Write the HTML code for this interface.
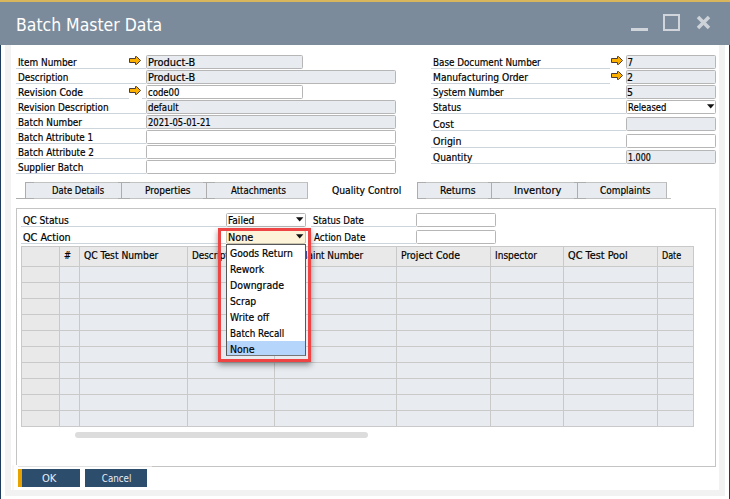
<!DOCTYPE html>
<html lang="en"><head><meta charset="utf-8"><title>Batch Master Data</title>
<style>

html,body{margin:0;padding:0;}
body{width:730px;height:499px;overflow:hidden;background:#fff;position:relative;font-family:"DejaVu Sans Condensed", "DejaVu Sans", "Liberation Sans", sans-serif;font-size:9.7px;font-stretch:condensed;color:#000;}
.abs,.t,.f,.ul,.tab,.hl,.vl{position:absolute;}
.t{white-space:nowrap;line-height:13px;height:13px;-webkit-text-stroke:0.18px currentColor;transform-origin:0 0;transform:scaleX(1);}
.f{box-sizing:border-box;height:14px;border:1px solid #b6b6b6;border-radius:1.5px;background:#e8ecf0;}
.f.w{background:#fff;}
.ul{height:1px;background:#cdd5dc;}
.tab{box-sizing:border-box;top:182px;height:17px;background:#e8ecf0;border:1px solid #c2c2c2;border-left-color:#adadad;border-right:none;}
.hl{height:1px;background:#c9c9c9;}
.vl{width:1px;background:#c9c9c9;}
.li{position:absolute;left:0;right:0;height:16px;}

</style></head><body>

<div class="abs" style="left:0;top:0;width:730px;height:2px;background:#d9b55c"></div>
<div class="abs" style="left:0;top:2px;width:730px;height:43px;background:#7b8b9b"></div>
<div class="abs" style="left:0;top:45px;width:1px;height:454px;background:#1f3c5c"></div>
<div class="abs" style="left:729px;top:45px;width:1px;height:454px;background:#1f3c5c"></div>
<div class="abs" style="left:5px;top:45px;width:6px;height:451px;background:#f2f2f2"></div>
<div class="abs" style="left:719px;top:45px;width:6px;height:451px;background:#f2f2f2"></div>
<div class="abs" style="left:5px;top:490px;width:720px;height:6px;background:#f2f2f2"></div>
<div class="abs" id="title" style="left:15.6px;top:14px;font-size:17.5px;line-height:22px;color:#fff;white-space:nowrap;transform-origin:0 0;transform:scaleX(.997)">Batch Master Data</div>
<svg class="abs" style="left:620px;top:5px" width="110" height="40" viewBox="620 5 110 40"><rect x="631" y="28" width="17" height="3" fill="#cfd5db"/><rect x="664" y="15" width="15" height="15" fill="none" stroke="#cfd5db" stroke-width="2"/><path d="M698 17 L709 28 M709 17 L698 28" stroke="#cdd3d9" stroke-width="3.5" fill="none"/></svg>
<div class="t" id="l0" style="left:17.68px;top:56px;transform:scaleX(1.0193);">Item Number</div>
<div class="ul" style="left:16px;top:68px;width:130px"></div>
<svg class="abs" style="left:129px;top:56px" width="13" height="10" viewBox="0 0 13 10"><path d="M0.5 2.5H6.5V0.5H7.5L11.5 4.5L7.5 8.5H6.5V6.5H0.5Z" fill="#fbb000" stroke="#4a3c3c" stroke-width="1"/></svg>
<div class="f" style="left:146px;top:55px;width:157px"></div>
<div class="t" style="left:147.77px;top:56px;transform:scaleX(1.1275);">Product-B</div>
<div class="t" id="l1" style="left:17.69px;top:71px;transform:scaleX(1.0146);">Description</div>
<div class="ul" style="left:16px;top:83px;width:130px"></div>
<div class="f" style="left:146px;top:70px;width:250px"></div>
<div class="t" style="left:147.77px;top:71px;transform:scaleX(1.1275);">Product-B</div>
<div class="t" id="l2" style="left:17.64px;top:86px;transform:scaleX(1.0583);">Revision Code</div>
<div class="ul" style="left:16px;top:98px;width:130px"></div>
<div class="abs" style="left:129px;top:98px;width:13px;height:1px;background:#fff"></div>
<svg class="abs" style="left:129px;top:86px" width="13" height="10" viewBox="0 0 13 10"><path d="M0.5 2.5H6.5V0.5H7.5L11.5 4.5L7.5 8.5H6.5V6.5H0.5Z" fill="#fbb000" stroke="#4a3c3c" stroke-width="1"/></svg>
<div class="f w" style="left:146px;top:85px;width:157px"></div>
<div class="t" style="left:147.92px;top:86px;transform:scaleX(0.9806);">code00</div>
<div class="t" id="l3" style="left:17.68px;top:101px;transform:scaleX(1.0207);">Revision Description</div>
<div class="ul" style="left:16px;top:113px;width:130px"></div>
<div class="f" style="left:146px;top:100px;width:250px"></div>
<div class="t" style="left:147.90px;top:101px;transform:none;">default</div>
<div class="t" id="l4" style="left:17.68px;top:116px;transform:scaleX(1.0177);">Batch Number</div>
<div class="ul" style="left:16px;top:128px;width:130px"></div>
<div class="f" style="left:146px;top:115px;width:250px"></div>
<div class="t" style="left:147.93px;top:116px;transform:scaleX(0.9651);">2021-05-01-21</div>
<div class="t" id="l5" style="left:17.69px;top:131px;transform:scaleX(1.0068);">Batch Attribute 1</div>
<div class="ul" style="left:16px;top:143px;width:130px"></div>
<div class="f w" style="left:146px;top:130px;width:250px"></div>
<div class="t" id="l6" style="left:17.68px;top:146px;transform:scaleX(1.0178);">Batch Attribute 2</div>
<div class="ul" style="left:16px;top:158px;width:130px"></div>
<div class="f w" style="left:146px;top:145px;width:250px"></div>
<div class="t" id="l7" style="left:17.67px;top:161px;transform:scaleX(1.0258);">Supplier Batch</div>
<div class="ul" style="left:16px;top:173px;width:130px"></div>
<div class="f w" style="left:146px;top:160px;width:250px"></div>
<div class="t" id="r0" style="left:432.99px;top:56px;transform:scaleX(1.0075);">Base Document Number</div>
<div class="ul" style="left:431px;top:68px;width:179px"></div>
<svg class="abs" style="left:611px;top:56px" width="13" height="10" viewBox="0 0 13 10"><path d="M0.5 2.5H6.5V0.5H7.5L11.5 4.5L7.5 8.5H6.5V6.5H0.5Z" fill="#fbb000" stroke="#4a3c3c" stroke-width="1"/></svg>
<div class="f" style="left:626px;top:55px;width:90px"></div>
<div class="t" style="left:627.50px;top:56px;transform:none;">7</div>
<div class="t" id="r1" style="left:432.95px;top:71px;transform:scaleX(1.0478);">Manufacturing Order</div>
<div class="ul" style="left:431px;top:83px;width:179px"></div>
<svg class="abs" style="left:611px;top:71px" width="13" height="10" viewBox="0 0 13 10"><path d="M0.5 2.5H6.5V0.5H7.5L11.5 4.5L7.5 8.5H6.5V6.5H0.5Z" fill="#fbb000" stroke="#4a3c3c" stroke-width="1"/></svg>
<div class="f" style="left:626px;top:70px;width:90px"></div>
<div class="t" style="left:627.42px;top:71px;transform:scaleX(1.0750);">2</div>
<div class="t" id="r2" style="left:432.99px;top:86px;transform:scaleX(1.0058);">System Number</div>
<div class="ul" style="left:431px;top:98px;width:195px"></div>
<div class="f" style="left:626px;top:85px;width:90px"></div>
<div class="t" style="left:627.42px;top:86px;transform:scaleX(1.0750);">5</div>
<div class="t" id="r3" style="left:432.99px;top:101px;transform:scaleX(1.0115);">Status</div>
<div class="ul" style="left:431px;top:113px;width:195px"></div>
<div class="f w" style="left:626px;top:100px;width:90px"></div>
<div class="t" style="left:627.53px;top:101px;transform:scaleX(0.9711);">Released</div>
<svg class="abs" style="left:707px;top:104px" width="8" height="5" viewBox="0 0 8 5"><path d="M0 0.3H7.4L3.7 4.5Z" fill="#111"/></svg>
<div class="t" id="r4" style="left:432.92px;top:118px;transform:scaleX(1.0833);">Cost</div>
<div class="ul" style="left:431px;top:130px;width:195px"></div>
<div class="f" style="left:626px;top:117px;width:90px"></div>
<div class="t" id="r5" style="left:432.92px;top:135px;transform:scaleX(1.0800);">Origin</div>
<div class="ul" style="left:431px;top:147px;width:195px"></div>
<div class="f w" style="left:626px;top:134px;width:90px"></div>
<div class="t" id="r6" style="left:432.96px;top:151px;transform:scaleX(1.0444);">Quantity</div>
<div class="ul" style="left:431px;top:163px;width:195px"></div>
<div class="f" style="left:626px;top:150px;width:90px"></div>
<div class="t" style="left:627.58px;top:151px;transform:scaleX(0.9167);">1.000</div>
<div class="hl" style="left:16px;top:198px;width:291px;background:#c2c2c2"></div>
<div class="hl" style="left:417px;top:198px;width:254px;background:#c2c2c2"></div>
<div class="tab" style="left:25px;width:96px;"></div>
<div class="t" id="tab0" style="left:51.83px;top:184px;transform:scaleX(0.9673);">Date Details</div>
<div class="tab" style="left:121px;width:85px;"></div>
<div class="t" id="tab1" style="left:144.67px;top:184px;transform:scaleX(1.0326);">Properties</div>
<div class="tab" style="left:206px;width:102px;border-right:1px solid #b8b8b8;"></div>
<div class="t" id="tab2" style="left:230.70px;top:184px;transform:scaleX(0.9873);">Attachments</div>
<div class="t" id="tab3" style="left:332.44px;top:184px;transform:scaleX(1.0594);">Quality Control</div>
<div class="tab" style="left:417px;width:74px;"></div>
<div class="t" id="tab4" style="left:440.33px;top:184px;transform:scaleX(1.0656);">Returns</div>
<div class="tab" style="left:491px;width:86px;"></div>
<div class="t" id="tab5" style="left:514.26px;top:184px;transform:scaleX(1.1375);">Inventory</div>
<div class="tab" style="left:577px;width:90px;border-right:1px solid #b8b8b8;"></div>
<div class="t" id="tab6" style="left:600.18px;top:184px;transform:scaleX(1.0250);">Complaints</div>
<div class="abs" style="left:25px;top:182px;width:9px;height:1px;background:#adadad"></div>
<div class="abs" style="left:16px;top:198px;width:18px;height:1px;background:#adadad"></div>
<div class="abs" style="left:118px;top:182px;width:12px;height:1px;background:#adadad"></div>
<div class="abs" style="left:118px;top:198px;width:12px;height:1px;background:#adadad"></div>
<div class="abs" style="left:203px;top:182px;width:12px;height:1px;background:#adadad"></div>
<div class="abs" style="left:203px;top:198px;width:12px;height:1px;background:#adadad"></div>
<div class="abs" style="left:417px;top:182px;width:9px;height:1px;background:#adadad"></div>
<div class="abs" style="left:417px;top:198px;width:9px;height:1px;background:#adadad"></div>
<div class="abs" style="left:488px;top:182px;width:12px;height:1px;background:#adadad"></div>
<div class="abs" style="left:488px;top:198px;width:12px;height:1px;background:#adadad"></div>
<div class="abs" style="left:574px;top:182px;width:12px;height:1px;background:#adadad"></div>
<div class="abs" style="left:574px;top:198px;width:12px;height:1px;background:#adadad"></div>
<div class="abs" style="left:16px;top:208px;width:700px;height:259px;box-sizing:border-box;border:1px solid #c4c4c4"></div>
<div class="t" id="qcs" style="left:22.65px;top:214px;transform:scaleX(1.0524);">QC Status</div>
<div class="ul" style="left:21px;top:226px;width:205px"></div>
<div class="t" id="qca" style="left:22.59px;top:231px;transform:scaleX(1.1098);">QC Action</div>
<div class="ul" style="left:21px;top:243px;width:205px"></div>
<div class="f w" style="left:226px;top:213px;width:80px"></div>
<div class="t" style="left:227.76px;top:214px;transform:scaleX(1.0417);">Failed</div>
<svg class="abs" style="left:296px;top:217px" width="8" height="5" viewBox="0 0 8 5"><path d="M0 0.3H7.4L3.7 4.5Z" fill="#111"/></svg>
<div class="t" id="sd" style="left:312.91px;top:214px;transform:scaleX(0.9900);">Status Date</div>
<div class="ul" style="left:311px;top:226px;width:105px"></div>
<div class="t" id="ad" style="left:313.90px;top:231px;transform:scaleX(1.0098);">Action Date</div>
<div class="ul" style="left:311px;top:243px;width:105px"></div>
<div class="f w" style="left:416px;top:213px;width:80px"></div>
<div class="f w" style="left:416px;top:230px;width:80px"></div>
<div class="abs" style="left:21px;top:246px;width:673px;height:181px;background:#e8ecf0"></div>
<div class="abs" style="left:21px;top:246px;width:673px;height:20px;background:#e9e9e9"></div>
<div class="abs" style="left:21px;top:246px;width:39px;height:181px;background:#e9e9e9"></div>
<div class="hl" style="left:21px;top:246px;width:673px"></div>
<div class="hl" style="left:21px;top:266px;width:673px"></div>
<div class="hl" style="left:21px;top:282px;width:673px"></div>
<div class="hl" style="left:21px;top:298px;width:673px"></div>
<div class="hl" style="left:21px;top:314px;width:673px"></div>
<div class="hl" style="left:21px;top:330px;width:673px"></div>
<div class="hl" style="left:21px;top:346px;width:673px"></div>
<div class="hl" style="left:21px;top:362px;width:673px"></div>
<div class="hl" style="left:21px;top:378px;width:673px"></div>
<div class="hl" style="left:21px;top:394px;width:673px"></div>
<div class="hl" style="left:21px;top:410px;width:673px"></div>
<div class="hl" style="left:21px;top:426px;width:673px"></div>
<div class="vl" style="left:21px;top:246px;height:181px"></div>
<div class="vl" style="left:59px;top:246px;height:181px"></div>
<div class="vl" style="left:79px;top:246px;height:181px"></div>
<div class="vl" style="left:187px;top:246px;height:181px"></div>
<div class="vl" style="left:274px;top:246px;height:181px"></div>
<div class="vl" style="left:396px;top:246px;height:181px"></div>
<div class="vl" style="left:490px;top:246px;height:181px"></div>
<div class="vl" style="left:563px;top:246px;height:181px"></div>
<div class="vl" style="left:657px;top:246px;height:181px"></div>
<div class="vl" style="left:693px;top:246px;height:181px"></div>
<div class="t" id="h0" style="left:64.45px;top:249px;transform:scaleX(0.9500);">#</div>
<div class="t" id="h1" style="left:83.65px;top:249px;transform:scaleX(1.0543);">QC Test Number</div>
<div class="t" id="h2" style="left:192.49px;top:249px;transform:scaleX(1.0125);">Description</div>
<div class="t" id="h3" style="left:279.08px;top:249px;transform:scaleX(1.0210);">Complaint Number</div>
<div class="t" id="h4" style="left:400.93px;top:249px;transform:scaleX(1.0741);">Project Code</div>
<div class="t" id="h5" style="left:495.37px;top:249px;transform:scaleX(1.0350);">Inspector</div>
<div class="t" id="h6" style="left:567.68px;top:249px;transform:scaleX(1.1173);">QC Test Pool</div>
<div class="t" id="h7" style="left:662.28px;top:249px;transform:scaleX(0.9200);">Date</div>
<div class="abs" style="left:75px;top:432px;width:293px;height:6px;border-radius:3px;background:#dcdcdc"></div>
<div class="abs" style="left:226px;top:230px;width:80px;height:14px;box-sizing:border-box;background:#fdf3d8;border:1px solid #c9c2ad;border-radius:2px"></div>
<div class="t" style="left:227.69px;top:231px;transform:scaleX(1.1143);">None</div>
<svg class="abs" style="left:296px;top:234px" width="8" height="5" viewBox="0 0 8 5"><path d="M0 0.3H7.4L3.7 4.5Z" fill="#111"/></svg>
<div class="abs" id="list" style="left:226px;top:244px;width:80px;height:112px;box-sizing:border-box;border:1px solid #585858;border-bottom-color:#777;background:#fff;overflow:hidden">
<div class="li" style="top:0px;"></div>
<div class="t" style="left:2.74px;top:2px;transform:scaleX(1.0614);">Goods Return</div>
<div class="li" style="top:16px;"></div>
<div class="t" style="left:2.94px;top:18px;transform:scaleX(1.0613);">Rework</div>
<div class="li" style="top:32px;"></div>
<div class="t" style="left:2.92px;top:34px;transform:scaleX(1.0776);">Downgrade</div>
<div class="li" style="top:48px;"></div>
<div class="t" style="left:2.94px;top:50px;transform:scaleX(1.0565);">Scrap</div>
<div class="li" style="top:64px;"></div>
<div class="t" style="left:2.90px;top:66px;transform:scaleX(1.0568);">Write off</div>
<div class="li" style="top:80px;"></div>
<div class="t" style="left:2.59px;top:82px;transform:scaleX(1.0077);">Batch Recall</div>
<div class="li" style="top:96px;background:#b5d5fb;"></div>
<div class="t" style="left:3.11px;top:98px;transform:scaleX(1.0857);">None</div>
</div>
<div class="abs" style="left:218px;top:228px;width:93px;height:134px;box-sizing:border-box;border:3px solid #ee4444;box-shadow:0 3px 6px rgba(0,0,0,.42)"></div>
<div class="abs" style="left:12px;top:465px;width:140px;height:25px;background:#fff"></div>
<div class="abs" style="left:12px;top:465px;width:2px;height:25px;background:#f8f8f8"></div>
<div class="abs" style="left:18px;top:466px;width:134px;height:1px;background:#e2e2e2"></div>
<div class="abs" style="left:18px;top:469px;width:62px;height:18px;background:#2d4d6d"></div>
<div class="abs" style="left:18px;top:469px;width:4px;height:18px;background:#e8a200"></div>
<div class="abs" style="left:85px;top:469px;width:62px;height:18px;background:#2d4d6d"></div>
<div class="t" id="ok" style="left:42.45px;top:472px;transform:scaleX(1.1455);color:#e9eef3;-webkit-text-stroke:0;">OK</div>
<div class="t" id="cancel" style="left:101.80px;top:472px;transform:none;color:#e9eef3;-webkit-text-stroke:0;">Cancel</div>

</body></html>
